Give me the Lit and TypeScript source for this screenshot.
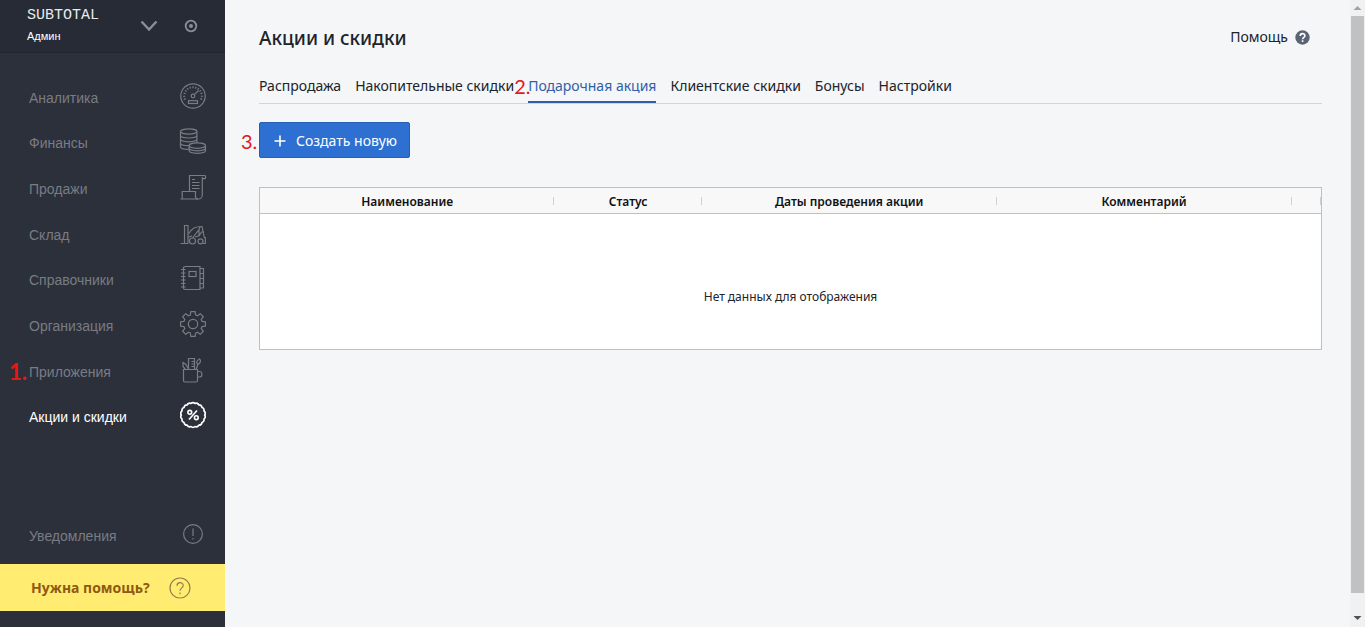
import { LitElement, html, svg, css, nothing } from "lit";
import { customElement, property, state } from "lit/decorators.js";
import { classMap } from "lit/directives/class-map.js";

const ticks = (count: number, from: number, to: number, inner: number, outer: number) =>
  Array.from({ length: count }, (_, i) => {
    const a = ((from + ((to - from) * i) / (count - 1)) * Math.PI) / 180;
    const p = (r: number) => `${(14 + r * Math.cos(a)).toFixed(2)} ${(14 + r * Math.sin(a)).toFixed(2)}`;
    return `M${p(inner)}L${p(outer)}`;
  }).join("");

const scallop = (count: number, r: number) => {
  const pt = (i: number) => {
    const a = (i * 2 * Math.PI) / count;
    return `${(14 + r * Math.cos(a)).toFixed(2)} ${(14 + r * Math.sin(a)).toFixed(2)}`;
  };
  let d = `M${pt(0)}`;
  for (let i = 1; i <= count; i++) d += `A2.8 2.8 0 0 1 ${pt(i)}`;
  return d + "Z";
};

const gear = () => {
  const steps: Array<[number, number]> = [[-16, 9.4], [-10, 12.6], [10, 12.6], [16, 9.4]];
  let d = "";
  for (let i = 0; i < 8; i++) {
    for (const [off, r] of steps) {
      const a = ((i * 45 + off) * Math.PI) / 180;
      d += `${d ? "L" : "M"}${(14 + r * Math.cos(a)).toFixed(2)} ${(14 + r * Math.sin(a)).toFixed(2)}`;
    }
  }
  return d + "Z";
};

const icons: Record<string, unknown> = {
  gauge: svg`<circle cx="14" cy="14" r="12.2"/><circle cx="14" cy="14" r="1.8"/>
    <path d="M15.3 12.7L19.5 8.5"/><rect x="9.5" y="18.7" width="9" height="2.8"/>
    <path d=${ticks(13, 160, 380, 7.8, 9.8)}/>`,
  coins: svg`<ellipse cx="9.7" cy="4.5" rx="8.2" ry="2.7"/>
    <path d="M1.5 4.5v15.200c0 1.500 3.600 2.700 8.200 2.700M17.900 4.500v11.300M1.500 8.300c0 1.500 3.600 2.700 8.200 2.700s8.200-1.200 8.200-2.700M1.500 12.100c0 1.500 3.600 2.700 8.200 2.700s8.200-1.200 8.200-2.700M1.500 15.900c0 1.500 3.600 2.700 8.200 2.700"/>
    <ellipse cx="18.300" cy="18.600" rx="8.200" ry="2.700"/>
    <path d="M10.100 18.600v5c0 1.500 3.600 2.700 8.200 2.700s8.200-1.200 8.200-2.700v-5M10.100 21.100c0 1.500 3.600 2.700 8.200 2.700s8.200-1.200 8.200-2.700"/>`,
  receipt: svg`<path d="M10.500 18V2.500h15.300c1 0 1.200 3.200 0 3.200h-2.600M23.300 4v17.500c0 2-1.200 4.500-3.300 4.500H3.200"/>
    <path d="M3.200 26V18.500h13.300v5c0 1.500 1.200 2.500 2.500 2.500M1.500 26h2M13 6.500h3M13 9.500h7.500M13 12.500h7.500M13 15.500h7.500"/>`,
  forklift: svg`<path d="M5.500 24.500V6.500h3.500v18M1.500 24.500h7.500M9 18.500l4-1.700M10 14.500c3-5.500 6-7 13-7l2.300 11h1v6h-2.500M13.500 19l6.500-8.500 1-3M20 10.500v6.300l-4 1.200M25 13h-2.500l-2.500 4"/>
    <circle cx="13.500" cy="22" r="3"/><circle cx="21.500" cy="22.300" r="2.500"/>`,
  book: svg`<path d="M4.500 4q0-1.500 1.500-1.500h15v23H6q-1.500 0-1.500-1.500zM21 4.500h3.500v19.500H21M24.500 9.500H21M24.500 14.500H21M24.500 19.500H21"/>
    <rect x="10" y="7.500" width="7" height="5"/>
    <path d="M2 5.500h4.500M2 9h4.500M2 12.500h4.500M2 16h4.500M2 19.500h4.500M2 23h4.500"/>`,
  gear: svg`<path d=${gear()} stroke-linejoin="round"/><circle cx="14" cy="14" r="4.700"/>`,
  mug: svg`<path d="M4.500 13.500h14v11q0 1.500-1.500 1.500H6q-1.500 0-1.500-1.500zM18.500 15.500h2q2.300 0 2.300 2v1.500q0 2-2.300 2h-2"/>
    <path d="M9.500 13.500V2.500h6v11M12.500 5.500h3M12.500 8h3M12.500 10.500h3M6.500 13.500L4 10.500v-4l3 2 2.500 4.500M17 13.500l2-5"/>
    <path d="M18.500 8.500c-1.500-1.500-.5-4.500 2-5.500 1.800 1.500 1 4.500-2 5.500z"/>`,
  percent: svg`<path stroke-width="1.700" stroke-linejoin="round" d=${scallop(18, 11.7)}/>
    <g stroke-width="1.600"><circle cx="10.800" cy="11.300" r="1.900"/><circle cx="17.300" cy="16.700" r="1.900"/><path d="M18 9.500L10 18.500"/></g>`,
  alert: svg`<circle cx="14" cy="14" r="9.400"/><path d="M14 8.500v7.500M14 18v1.600"/>`,
  question: svg`<circle cx="14" cy="14" r="10"/><path d="M11 11.800c0-4.200 6.200-4 6.200-.400 0 2.500-3.200 2.500-3.200 5.400M14 18.500v1.700"/>`,
};

@customElement("ui-icon")
class UiIcon extends LitElement {
  @property() name = "";

  static styles = css`
    :host { display: block; width: 28px; height: 28px; flex: none; }
    .glyph { display: block; width: 28px; height: 28px; fill: none; stroke: currentColor; stroke-width: 1.2; }
  `;

  render() {
    return html`<svg class="glyph" viewBox="0 0 28 28" aria-hidden="true">${icons[this.name] ?? nothing}</svg>`;
  }
}

@customElement("app-sidebar")
class AppSidebar extends LitElement {
  private items = [
    { label: "Аналитика", icon: "gauge" },
    { label: "Финансы", icon: "coins" },
    { label: "Продажи", icon: "receipt" },
    { label: "Склад", icon: "forklift" },
    { label: "Справочники", icon: "book" },
    { label: "Организация", icon: "gear" },
    { label: "Приложения", icon: "mug" },
    { label: "Акции и скидки", icon: "percent", mark: "1.", active: true },
  ];

  static styles = css`
    :host {
      display: flex; flex-direction: column; flex: none; width: 225px; box-sizing: border-box;
      padding-bottom: 16px; background: #2c303b; color: #787c83;
      font: 14px/20px "Liberation Sans", Arial, sans-serif;
    }
    .head {
      display: flex; align-items: center; height: 53px; padding: 0 26px 0 27px; box-sizing: border-box;
      background: #272b35; border-bottom: 1px solid #22252e; flex: none;
    }
    .brand { flex: 1; color: #fff; }
    .logo { display: block; font: 15px/20px "Liberation Mono", monospace; color: #e8eaee; }
    .user { display: block; font: 11px/20px "Liberation Sans", Arial, sans-serif; }
    .plain { padding: 0; border: 0; background: none; color: #8b8e95; cursor: pointer; }
    .plain svg { display: block; fill: none; stroke: currentColor; }
    .tools { display: flex; align-items: center; gap: 25px; }
    .menu { display: grid; grid-auto-rows: 1fr; height: 365px; margin: 22px 0 0; padding: 0; list-style: none; }
    .item { position: relative; display: flex; }
    .link {
      display: flex; flex: 1; align-items: center; justify-content: space-between;
      padding: 0 18px 0 29px; color: inherit; text-decoration: none;
    }
    .link ui-icon { margin-bottom: 4px; }
    .active { color: #fff; }
    .mark {
      position: absolute; left: 9px; bottom: 54px; color: #e31818;
      font: bold 22px/28px Lato, sans-serif;
    }
    .notice { flex: none; margin-top: auto; height: 56px; }
    .help {
      display: flex; align-items: center; gap: 16px; height: 47px; padding-left: 31px;
      background: #ffec70; color: #8f5a14; text-decoration: none;
      font: bold 14px/20px "Noto Sans", sans-serif;
    }
    .help ui-icon { color: #8f8048; }
  `;

  render() {
    return html`
      <header class="head">
        <div class="brand"><span class="logo">SUBTOTAL</span><span class="user">Админ</span></div>
        <div class="tools">
          <button class="plain" aria-label="Меню">
            <svg width="18" height="12" viewBox="0 0 18 12" stroke-width="2.400"><path d="M1.500 1.500L9 9.500l7.500-8"/></svg>
          </button>
          <button class="plain" aria-label="Статус">
            <svg width="16" height="16" viewBox="0 0 16 16"><circle cx="8" cy="8" r="5.300" stroke-width="1.800"/><circle cx="8" cy="8" r="2" fill="currentColor" stroke="none"/></svg>
          </button>
        </div>
      </header>
      <ul class="menu">
        ${this.items.map(
          (i) => html`<li class="item">
            ${i.mark ? html`<span class="mark">${i.mark}</span>` : nothing}
            <a href="#" class=${classMap({ link: true, active: !!i.active })}>${i.label}<ui-icon name=${i.icon}></ui-icon></a>
          </li>`
        )}
      </ul>
      <a href="#" class="link notice">Уведомления<ui-icon name="alert"></ui-icon></a>
      <a href="#" class="help">Нужна помощь?<ui-icon name="question"></ui-icon></a>
    `;
  }
}

@customElement("app-root")
class AppRoot extends LitElement {
  @state() private current = "Подарочная акция";
  private tabs = ["Распродажа", "Накопительные скидки", "Подарочная акция", "Клиентские скидки", "Бонусы", "Настройки"];

  static styles = css`
    :host {
      display: flex; min-height: 100vh; background: #f4f6f8; color: #20232b;
      font: 14px/20px "Noto Sans", sans-serif;
    }
    .main { flex: 1; min-width: 0; padding: 22px 28px 0 34px; }
    .top { display: flex; justify-content: space-between; align-items: flex-start; }
    .title { margin: 0; font-size: 19px; line-height: 32px; font-weight: 500; }
    .assist {
      display: flex; align-items: center; gap: 7px; padding-right: 12px; line-height: 30px;
      color: inherit; text-decoration: none;
    }
    .assist svg { display: block; }
    .tabs { display: flex; gap: 14px; margin-top: 20px; border-bottom: 1px solid #cfd6dc; }
    .tab { position: relative; padding: 2px 0 5px; color: inherit; text-decoration: none; border-bottom: 2px solid transparent; }
    .current { color: #305fa8; border-color: #305fa8; }
    .mark { position: absolute; color: #e31818; font: 20px/28px Lato, sans-serif; }
    .tab .mark { left: -14px; top: -2px; }
    .action { position: relative; display: flex; margin: 18px 0 29px; }
    .action .mark { left: -18px; top: 5px; }
    .create {
      display: flex; align-items: center; gap: 10px; height: 36px; padding: 1px 12px 0 14px; color: #fff;
      background: #2d70d2; border: 1px solid #285fb4; border-radius: 2px; font: inherit; cursor: pointer;
    }
    .create svg { display: block; }
    .grid { width: 100%; table-layout: fixed; border-collapse: collapse; border: 1px solid #c0c0c0; background: #fff; }
    .grid th {
      position: relative; height: 26px; padding: 2px 0 0; box-sizing: border-box; background: #f8f8f8;
      border-bottom: 1px solid #c0c0c0; font-size: 12px; font-weight: 600; color: #111;
    }
    .grid th::after { content: ""; position: absolute; right: 0; top: 9px; width: 1px; height: 8px; background: #d0d0d0; }
    .narrow { width: 30px; }
    .empty { height: 136px; padding: 30px 0 0; box-sizing: border-box; text-align: center; font-size: 12px; }
    .scroll {
      display: flex; flex-direction: column; align-items: center; justify-content: space-between;
      flex: none; width: 15px; background: #f1f1f1;
    }
    .thumb { flex: 1; width: 13px; background: #c1c1c1; }
    .scroll svg { display: block; flex: none; }
  `;

  render() {
    return html`
      <app-sidebar></app-sidebar>
      <main class="main">
        <div class="top">
          <h1 class="title">Акции и скидки</h1>
          <a href="#" class="assist">Помощь
            <svg width="15" height="15" viewBox="0 0 15 15" aria-hidden="true">
              <circle cx="7.500" cy="7.500" r="7.200" fill="#5a6474"/>
              <path d="M5.200 6c0-3.200 4.700-3 4.700-.300 0 1.700-2.300 1.700-2.300 3.600M7.600 10.300v1.700" fill="none" stroke="#fff" stroke-width="1.600"/>
            </svg>
          </a>
        </div>
        <nav class="tabs">
          ${this.tabs.map(
            (t) => html`<a href="#" class=${classMap({ tab: true, current: t === this.current })}
              @click=${(e: Event) => { e.preventDefault(); this.current = t; }}
              >${t === "Подарочная акция" ? html`<span class="mark">2.</span>` : nothing}${t}</a>`
          )}
        </nav>
        <div class="action">
          <span class="mark">3.</span>
          <button class="create">
            <svg width="12" height="12" viewBox="0 0 12 12" aria-hidden="true"><path d="M6 .5v11M.5 6h11" stroke="#fff" stroke-width="1.600"/></svg>
            Создать новую
          </button>
        </div>
        <table class="grid">
          <colgroup><col span="7" /><col class="narrow" /></colgroup>
          <thead>
            <tr>
              <th colspan="2">Наименование</th>
              <th>Статус</th>
              <th colspan="2">Даты проведения акции</th>
              <th colspan="2">Комментарий</th>
              <th></th>
            </tr>
          </thead>
          <tbody><tr><td class="empty" colspan="8">Нет данных для отображения</td></tr></tbody>
        </table>
      </main>
      <div class="scroll" aria-hidden="true">
        <svg width="15" height="16" viewBox="0 0 15 16"><path d="M3.500 10L7.500 6l4 4z" fill="#a3a3a3"/></svg>
        <div class="thumb"></div>
        <svg width="15" height="34" viewBox="0 0 15 34"><path d="M3.500 23l4 4 4-4z" fill="#505050"/></svg>
      </div>
    `;
  }
}
